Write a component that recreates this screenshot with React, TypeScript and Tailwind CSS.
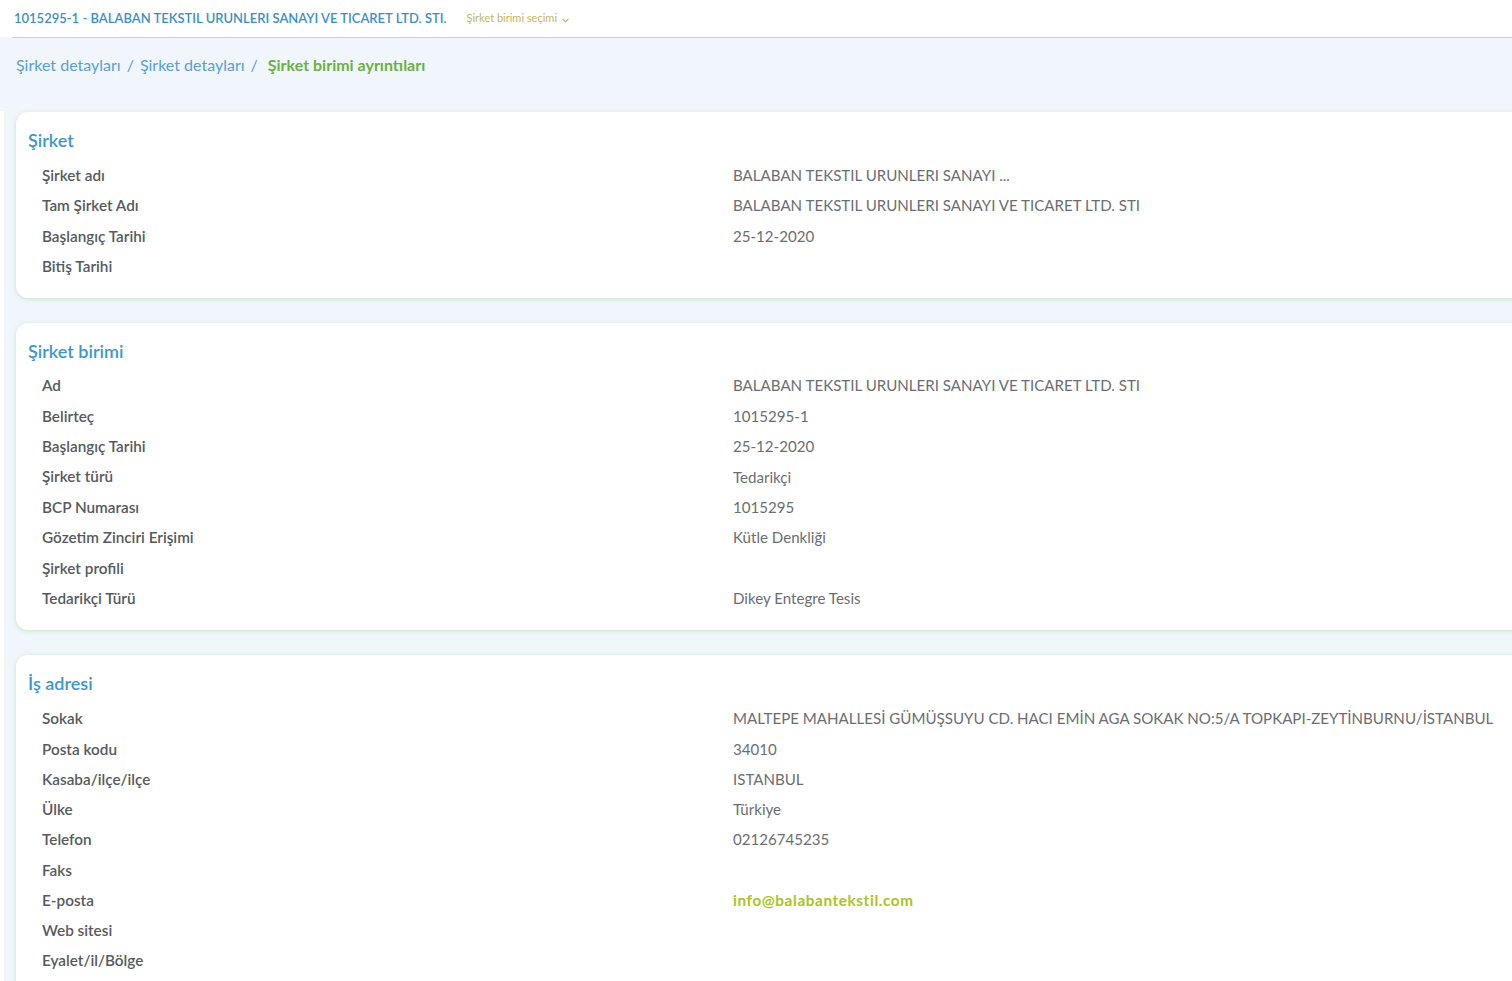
import React from "react";

const font = { fontFamily: '"Lato", "Noto Sans", sans-serif' };

type Row = { label: string; value?: string; email?: boolean };

function Card({ title, rows, pitch, gap }: { title: string; rows: Row[]; pitch: string; gap: string }) {
  return (
    <div className="w-[1540px] rounded-xl bg-white pt-[17px] pb-[16px] pl-3 shadow-[0_1px_4px_rgba(150,205,130,0.45)]">
      <div className="text-[18px] font-semibold leading-[22px] text-[#3d97cc]">{title}</div>
      <div className={"pl-[14px] " + gap}>
        {rows.map((r, i) => (
          <div key={i} className={"grid grid-cols-[691px_1fr] items-center text-[15.3px] " + pitch}>
            <div className="font-semibold text-[#555a5e]">{r.label}</div>
            <div
              className={
                r.email
                  ? "font-bold tracking-[0.6px] text-[#a9c423]"
                  : "text-[15.1px] text-[#6a6e72]"
              }
            >
              {r.value ?? ""}
            </div>
          </div>
        ))}
      </div>
    </div>
  );
}

export default function App() {
  return (
    <div style={font} className="h-[981px] w-[1512px] overflow-hidden bg-[#f0f6fc]">
      <div className="flex h-[37px] items-center bg-white pl-[14px]">
        <span className="text-[13px] font-semibold text-[#3a8fc6]">
          1015295-1 - BALABAN TEKSTIL URUNLERI SANAYI VE TICARET LTD. STI.
        </span>
        <span className="ml-[20px] flex items-center gap-1 text-[11px] text-[#c2b65e]">
          Şirket birimi seçimi
          <svg width="9" height="9" viewBox="0 0 10 10" className="mt-[3px]">
            <path d="M2 3.5 L5 6.5 L8 3.5" fill="none" stroke="#c2b65e" strokeWidth="1.3" strokeLinecap="round" />
          </svg>
        </span>
      </div>
      <div className="ml-3 h-px bg-[#c9ccd0]" />
      <div className="flex">
        <div className="mt-[73px] w-[4px] shrink-0 bg-white" />
        <div className="flex-1">
          <div className="flex h-[53px] items-center pl-[12px] text-[16px]">
            <span className="text-[#5a9fd0]">Şirket detayları</span>
            <span className="mx-[6px] text-[#5a9fd0]">/</span>
            <span className="text-[#5a9fd0]">Şirket detayları</span>
            <span className="ml-[6px] mr-[10px] text-[#5a9fd0]">/</span>
            <span className="font-bold text-[#6cb043]">Şirket birimi ayrıntıları</span>
          </div>
          <div className="flex flex-col gap-[25px] pl-[12px] pt-[21px]">
            <Card
              title="Şirket"
              pitch="h-[30.4px]"
              gap="mt-[9px]"
              rows={[
                { label: "Şirket adı", value: "BALABAN TEKSTIL URUNLERI SANAYI ..." },
                { label: "Tam Şirket Adı", value: "BALABAN TEKSTIL URUNLERI SANAYI VE TICARET LTD. STI" },
                { label: "Başlangıç Tarihi", value: "25-12-2020" },
                { label: "Bitiş Tarihi" },
              ]}
            />
            <Card
              title="Şirket birimi"
              pitch="h-[30.4px]"
              gap="mt-[9px]"
              rows={[
                { label: "Ad", value: "BALABAN TEKSTIL URUNLERI SANAYI VE TICARET LTD. STI" },
                { label: "Belirteç", value: "1015295-1" },
                { label: "Başlangıç Tarihi", value: "25-12-2020" },
                { label: "Şirket türü", value: "Tedarikçi" },
                { label: "BCP Numarası", value: "1015295" },
                { label: "Gözetim Zinciri Erişimi", value: "Kütle Denkliği" },
                { label: "Şirket profili" },
                { label: "Tedarikçi Türü", value: "Dikey Entegre Tesis" },
              ]}
            />
            <Card
              title="İş adresi"
              pitch="h-[30.25px]"
              gap="mt-[10px]"
              rows={[
                { label: "Sokak", value: "MALTEPE MAHALLESİ GÜMÜŞSUYU CD. HACI EMİN AGA SOKAK NO:5/A TOPKAPI-ZEYTİNBURNU/İSTANBUL" },
                { label: "Posta kodu", value: "34010" },
                { label: "Kasaba/ilçe/ilçe", value: "ISTANBUL" },
                { label: "Ülke", value: "Türkiye" },
                { label: "Telefon", value: "02126745235" },
                { label: "Faks" },
                { label: "E-posta", value: "info@balabantekstil.com", email: true },
                { label: "Web sitesi" },
                { label: "Eyalet/il/Bölge" },
                { label: "" },
              ]}
            />
          </div>
        </div>
      </div>
    </div>
  );
}
